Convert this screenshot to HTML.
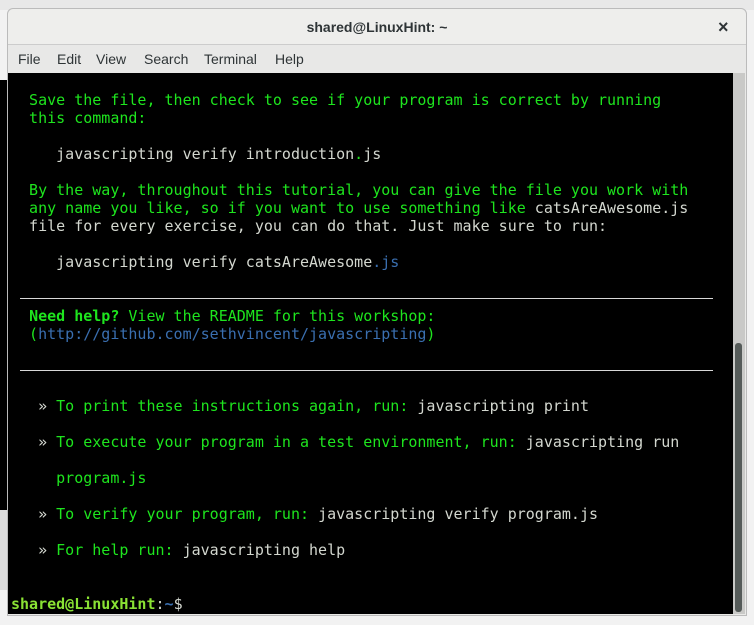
<!DOCTYPE html>
<html><head><style>
body{margin:0;width:754px;height:625px;overflow:hidden;background:#f2f2f2;position:relative;font-family:"Liberation Sans",sans-serif}
.abs{position:absolute}
.t{position:absolute;font-family:"DejaVu Sans Mono","Liberation Mono",monospace;font-size:15px;line-height:18px;white-space:pre;color:#d3d7cf;left:11px}
.g{color:#1ee51e}
.b{color:#3a6fb0}
.rule{position:absolute;left:20px;width:693px;height:1px;background:#d8d8d8}
</style></head><body>
<div class="abs" style="left:0;top:0;width:754px;height:10px;background:#e8e8e8"></div>
<div class="abs" style="left:0;top:80px;width:10px;height:430px;background:#000"></div>
<div class="abs" style="left:0;top:510px;width:10px;height:80px;background:#dcdcdc"></div>
<div class="abs" style="left:7px;top:8px;width:740px;height:608px;background:#e9e9e7;border-radius:6px 6px 0 0;border:1px solid #bbb;box-sizing:border-box"></div>
<div class="abs" style="left:8px;top:9px;width:738px;height:35px;background:#eeeeec;border-radius:6px 6px 0 0;border-bottom:1px solid #ccc;text-align:center;font-size:14px;font-weight:bold;line-height:36px;color:#2e3436">shared@LinuxHint: ~</div>
<div class="abs" style="left:718px;top:9px;font-size:18px;line-height:36px;color:#2e3436;font-weight:bold">×</div>
<div class="abs" style="left:8px;top:45px;width:738px;height:28px;background:#e8e8e7;font-size:14px;line-height:28px;color:#2e3436">
<span style="position:absolute;left:10px">File</span><span style="position:absolute;left:49px">Edit</span><span style="position:absolute;left:88px">View</span><span style="position:absolute;left:136px">Search</span><span style="position:absolute;left:196px">Terminal</span><span style="position:absolute;left:267px">Help</span></div>
<div class="abs" style="left:8px;top:73px;width:725px;height:541px;background:#000"></div>
<div class="abs" style="left:733px;top:73px;width:12px;height:541px;background:#c9c9c7"></div>
<div class="abs" style="left:735px;top:343px;width:7px;height:269px;background:#555b59;border-radius:3px"></div>

<div class="t g" style="top:91px">  Save the file, then check to see if your program is correct by running
  this command:

     <span style="color:#d3d7cf">javascripting verify introduction</span>.<span style="color:#d3d7cf">js</span>

  By the way, throughout this tutorial, you can give the file you work with
  any name you like, so if you want to use something like <span style="color:#d3d7cf">catsAreAwesome.js</span>
<span style="color:#d3d7cf">  file for every exercise, you can do that. Just make sure to run:</span>

     <span style="color:#d3d7cf">javascripting verify catsAreAwesome</span><span class="b">.js</span>


  <b>Need help?</b> View the README for this workshop:
  (<span class="b">http://github.com/sethvincent/javascripting</span>)



   <span style="color:#d3d7cf">»</span> To print these instructions again, run: <span style="color:#d3d7cf">javascripting print</span>

   <span style="color:#d3d7cf">»</span> To execute your program in a test environment, run: <span style="color:#d3d7cf">javascripting run</span>

     program.js

   <span style="color:#d3d7cf">»</span> To verify your program, run: <span style="color:#d3d7cf">javascripting verify program.js</span>

   <span style="color:#d3d7cf">»</span> For help run: <span style="color:#d3d7cf">javascripting help</span>


<b style="color:#8ae234">shared@LinuxHint</b><span style="color:#d3d7cf">:</span><b class="b">~</b><span style="color:#d3d7cf">$</span></div>
<div class="rule" style="top:298px"></div>
<div class="rule" style="top:370px"></div>
</body></html>
